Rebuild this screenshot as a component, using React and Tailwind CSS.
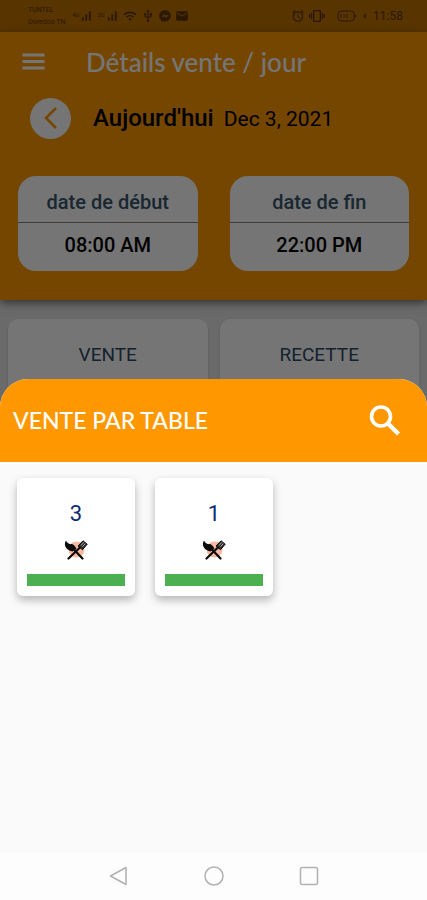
import React from 'react';
import { MdAlarm, MdVibration, MdUsb, MdMail, MdSignalCellularAlt, MdWifi, MdBolt } from 'react-icons/md';
import { FaFacebookMessenger } from 'react-icons/fa';

const tables = [3, 1];

const StatusBar = () => (
    <header className="h-8 pl-7 pr-6 flex items-center bg-[#bf7200] text-[#5c3600] font-['Roboto',sans-serif]">
        <div className="w-11 shrink-0 text-[7px] leading-3 whitespace-nowrap">
            <div>TUNTEL</div>
            <div>Ooredoo TN</div>
        </div>
        <div className="flex items-center gap-1">
            <div className="flex items-center">
                <span className="text-[6px] leading-3 self-start">4G</span>
                <MdSignalCellularAlt className="size-3.5" />
            </div>
            <div className="flex items-center">
                <span className="text-[6px] leading-3 self-start">3G</span>
                <MdSignalCellularAlt className="size-3.5" />
            </div>
            <MdWifi className="size-3.5" />
            <MdUsb className="size-3.5" />
            <FaFacebookMessenger className="size-3" />
            <MdMail className="size-3.5" />
        </div>
        <div className="ml-auto flex items-center gap-1">
            <MdAlarm className="size-3.5" />
            <MdVibration className="size-4" />
            <svg className="ml-2 w-5 h-3" viewBox="0 0 20 12" fill="none" stroke="currentColor">
                <rect x="1" y="1" width="16" height="10" rx="3" />
                <path d="M4 4v4M7 4v4M10 4v4M18.500 4.500v3" />
            </svg>
            <MdBolt className="size-2" />
            <span className="text-xs">11:58</span>
        </div>
    </header>
);

const DateCard = ({ label, time }) => (
    <button type="button" className="flex-1 rounded-[18px] bg-white text-center text-xl leading-6 font-medium">
        <span className="block pt-3.5 pb-2 border-b border-[#888888] text-[#37566b]">{label}</span>
        <span className="block pt-2.5 pb-3.5 text-black">{time}</span>
    </button>
);

const TotalCard = ({ label }) => (
    <div className="flex-1 h-24 pt-6 rounded-[10px] bg-white shadow-sm text-center text-[19px] leading-6 text-[#2c4a66]">
        {label}
    </div>
);

// crossed knife and spatula on a peach disc
const GrillIcon = () => (
    <svg className="w-6 h-5" viewBox="0 0 24 20">
        <circle cx="12.500" cy="9.500" r="8" fill="#f9b8a0" />
        <g stroke="#0b0b0b" strokeLinecap="round" fill="none">
            <path d="M9 8.500l9.500 10" strokeWidth="2.200" />
            <path d="M4.500 18.500L17 6.500" strokeWidth="2.200" />
        </g>
        <path d="M2 .5C-.5 4 1 10 8.500 11.500l4-3C10.500 5 8.500 3.500 6.500 4.200 4.500 4 3 2.500 2 .5z" fill="#0b0b0b" />
        <path d="M14 6L19 .8l4.200 3.400-4.700 5.500z" fill="#2b2b2b" stroke="#0b0b0b" />
        <path d="M17 5.500l2.800-3.200M18.500 6.800l2.800-3.200" stroke="#cccccc" strokeWidth=".8" />
    </svg>
);

const TableCard = ({ number }) => (
    <button
        type="button"
        className="w-[118px] h-[118px] px-2.5 pt-5 pb-2.5 flex flex-col items-center rounded-md bg-white shadow-[0_4px_8px_rgba(0,0,0,0.28)]"
    >
        <span className="text-[22px] leading-8 text-[#0b2a70]">{number}</span>
        <span className="mt-2.5"><GrillIcon /></span>
        <span className="mt-auto w-full h-3 bg-[#4caf50]" />
    </button>
);

const NavBar = () => (
    <nav className="h-12 px-[108px] flex items-center justify-between bg-[#fdfdfd] text-[#b0b0b0]">
        <button type="button" aria-label="Retour">
            <svg className="size-5" viewBox="0 0 20 20" fill="none" stroke="currentColor" strokeWidth="1.500">
                <path d="M18 1.500v17L2.500 10z" strokeLinejoin="round" />
            </svg>
        </button>
        <button type="button" aria-label="Accueil">
            <svg className="size-5" viewBox="0 0 20 20" fill="none" stroke="currentColor" strokeWidth="1.500">
                <circle cx="10" cy="10" r="9" />
            </svg>
        </button>
        <button type="button" aria-label="Applications">
            <svg className="size-5" viewBox="0 0 20 20" fill="none" stroke="currentColor" strokeWidth="1.500">
                <rect x="1.500" y="1.500" width="17" height="17" rx="2" />
            </svg>
        </button>
    </nav>
);

const App = () => {
    return (
        <main className="grid grid-cols-1 min-h-screen font-['Roboto',sans-serif]">
            <div className="col-start-1 row-start-1 bg-[#e6e6e6]">
                <StatusBar />
                <section className="pb-[29px] bg-[#ff9800] shadow-[0_3px_8px_rgba(0,0,0,0.5)]">
                    <div className="h-[60px] pl-5 flex items-center gap-[38px] text-white">
                        <button type="button" aria-label="Menu">
                            <svg className="size-7" viewBox="0 0 28 28" stroke="currentColor" strokeWidth="2.800">
                                <path d="M2.500 7h22M2.500 13.500h22M2.500 20h22" />
                            </svg>
                        </button>
                        <h1 className="font-['Lato',sans-serif] font-medium text-[26px]">Détails vente / jour</h1>
                    </div>
                    <div className="h-[52px] pl-[30px] flex items-center text-black">
                        <button
                            type="button"
                            aria-label="Jour précédent"
                            className="mr-[22px] size-[41px] flex items-center justify-center rounded-full bg-white text-[#ff9800]"
                        >
                            <svg className="size-6" viewBox="0 0 24 24" fill="none" stroke="currentColor" strokeWidth="2.500">
                                <path d="M17 2L7 12l10 10" />
                            </svg>
                        </button>
                        <p className="pt-0.5 flex items-baseline gap-2.5">
                            <span className="text-2xl font-medium">Aujourd'hui</span>
                            <span className="text-[21px]">Dec 3, 2021</span>
                        </p>
                    </div>
                    <div className="mt-8 px-[18px] flex gap-8">
                        <DateCard label="date de début" time="08:00 AM" />
                        <DateCard label="date de fin" time="22:00 PM" />
                    </div>
                </section>
                <div className="mt-[19px] px-2 flex gap-3">
                    <TotalCard label="VENTE" />
                    <TotalCard label="RECETTE" />
                </div>
            </div>

            <div className="relative col-start-1 row-start-1 pt-[379px] flex flex-col bg-black/54">
                <section className="flex-1 flex flex-col rounded-t-[28px] overflow-hidden bg-[#fafafa]">
                    <div className="h-[83px] pl-[13px] pr-[22px] flex items-center justify-between bg-[#ff9800] text-white">
                        <h2 className="font-['Lato',sans-serif] font-medium text-[23px]">VENTE PAR TABLE</h2>
                        <button type="button" aria-label="Rechercher">
                            <svg className="size-10" viewBox="0 0 40 40" fill="none" stroke="currentColor">
                                <circle cx="16" cy="15.500" r="9.500" strokeWidth="3.600" />
                                <path d="M22.500 22l11 11" strokeWidth="4.400" />
                            </svg>
                        </button>
                    </div>
                    <div className="flex-1 px-[17px] pt-4 pb-6 flex flex-wrap content-start gap-5">
                        {tables.map((number) => (
                            <TableCard key={number} number={number} />
                        ))}
                    </div>
                    <NavBar />
                </section>
            </div>
        </main>
    );
};

export default App;
